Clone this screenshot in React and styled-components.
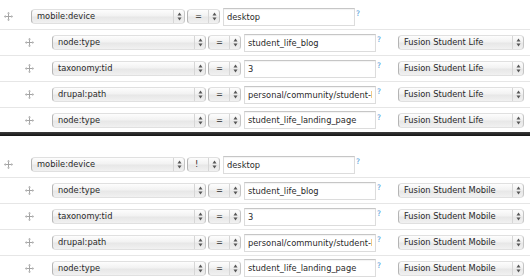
import React from 'react';
import styled, { createGlobalStyle } from 'styled-components';

const Global = createGlobalStyle`
  html, body { margin: 0; padding: 0; background: #fff; }
  body { font-family: "DejaVu Sans", "Liberation Sans", sans-serif; }
`;

const Page = styled.div`
  width: 530px;
  height: 279px;
  overflow: hidden;
  padding-top: 4px;
  box-sizing: border-box;
`;

const Section = styled.div`
  display: flex;
  flex-direction: column;
`;

const Row = styled.div`
  display: flex;
  align-items: center;
  height: 25px;
  flex-shrink: 0;
  border-bottom: 1px solid #e6e6e6;
  padding-left: ${p => (p.$child ? 21 : 0)}px;
  &:last-child {
    border-bottom: none;
    height: 24px;
  }
`;

const Divider = styled.div`
  height: 4px;
  background: linear-gradient(#3c3c3c, #151515);
  margin-bottom: 16px;
  flex-shrink: 0;
`;

const HandleIcon = styled.svg`
  width: 9px;
  height: 9px;
  margin-left: 4px;
  margin-right: 18px;
  flex-shrink: 0;
`;

const SelectBox = styled.div`
  box-sizing: border-box;
  width: ${p => p.$w}px;
  height: 15px;
  margin-right: ${p => p.$mr || 0}px;
  flex-shrink: 0;
  display: flex;
  align-items: center;
  border: 1px solid #e0e0e0;
  border-left-color: #b4b4b4;
  border-right-color: #c4c4c4;
  border-radius: 4px;
  background: linear-gradient(#fdfdfd, #f2f2f2 45%, #e7e7e7 55%, #f1f1f1);
  font-size: 8.3px;
  color: #2a2a2a;
`;

const SelectLabel = styled.span`
  flex: 1;
  padding-left: ${p => p.$pad || 5}px;
  white-space: nowrap;
  overflow: hidden;
  line-height: 13px;
`;

const Arrows = styled.span`
  width: 10px;
  height: 100%;
  border-left: 1px solid #d6d6d6;
  display: flex;
  align-items: center;
  justify-content: center;
  flex-shrink: 0;
`;

const TextInput = styled.input`
  box-sizing: border-box;
  width: 132px;
  height: 18px;
  margin: 0;
  flex-shrink: 0;
  border: 1px solid #dcdcdc;
  border-top-color: #c6c6c6;
  padding: 0 3px;
  font-family: "DejaVu Sans", "Liberation Sans", sans-serif;
  font-size: 8.3px;
  color: #2a2a2a;
  background: #fff;
  box-shadow: inset 0 1px 1px rgba(0, 0, 0, 0.05);
  outline: none;
`;

const Help = styled.span`
  width: 22px;
  flex-shrink: 0;
  align-self: flex-start;
  margin-top: 5px;
  padding-left: 1px;
  box-sizing: border-box;
  font-size: 7.5px;
  color: #4a95d6;
`;

const Handle = () => (
  <HandleIcon viewBox="0 0 9 9">
    <g fill="#a4a4a4">
      <rect x="4" y="1.5" width="1" height="6" />
      <rect x="1.5" y="4" width="6" height="1" />
      <path d="M4.5 0 L6 1.6 L3 1.6 Z" />
      <path d="M4.5 9 L6 7.4 L3 7.4 Z" />
      <path d="M0 4.5 L1.6 3 L1.6 6 Z" />
      <path d="M9 4.5 L7.4 3 L7.4 6 Z" />
    </g>
  </HandleIcon>
);

const Select = ({ w, mr, label, pad }) => (
  <SelectBox $w={w} $mr={mr}>
    <SelectLabel $pad={pad}>{label}</SelectLabel>
    <Arrows>
      <svg width="5" height="9" viewBox="0 0 5 9">
        <path d="M2.5 0.5 L4.5 3.5 L0.5 3.5 Z" fill="#555" />
        <path d="M2.5 8.5 L4.5 5.5 L0.5 5.5 Z" fill="#555" />
      </svg>
    </Arrows>
  </SelectBox>
);

const rules = [
  { field: 'node:type', value: 'student_life_blog' },
  { field: 'taxonomy:tid', value: '3' },
  { field: 'drupal:path', value: 'personal/community/student-life' },
  { field: 'node:type', value: 'student_life_landing_page' },
];

const Block = ({ op, theme }) => (
  <Section>
    <Row>
      <Handle />
      <Select w={154} mr={2} label="mobile:device" />
      <Select w={33} mr={3} label={op} pad={7} />
      <TextInput defaultValue="desktop" />
      <Help>?</Help>
    </Row>
    {rules.map((r, i) => (
      <Row $child key={i}>
        <Handle />
        <Select w={154} mr={2} label={r.field} />
        <Select w={33} mr={3} label="=" pad={7} />
        <TextInput defaultValue={r.value} />
        <Help>?</Help>
        <Select w={126} label={theme} />
      </Row>
    ))}
  </Section>
);

export default function App() {
  return (
    <>
      <Global />
      <Page>
        <Block op="=" theme="Fusion Student Life" />
        <Divider />
        <Block op="!" theme="Fusion Student Mobile" />
      </Page>
    </>
  );
}
